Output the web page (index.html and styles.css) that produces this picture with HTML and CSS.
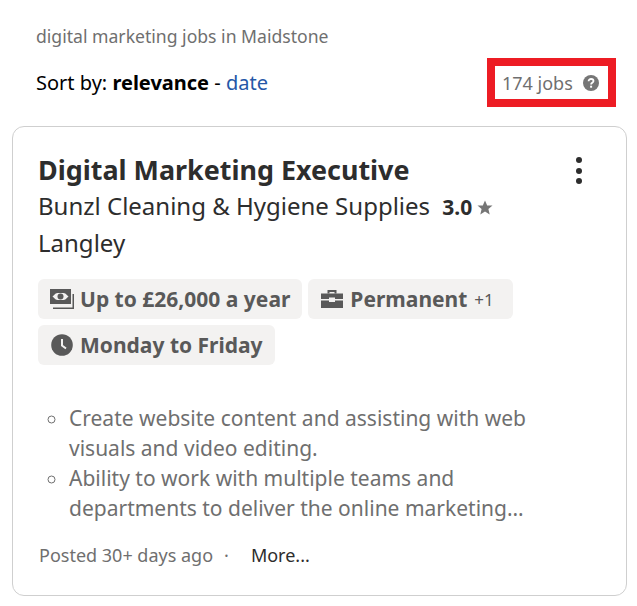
FILE: index.html
```html
<!DOCTYPE html>
<html>
<head>
  <title>digital marketing jobs in Maidstone</title>
  <link rel="stylesheet" href="styles.css">
</head>
<body>
  <div class="query">digital marketing jobs in Maidstone</div>
  <div class="sort-row">
    <div class="sort">Sort by: <b>relevance</b> - <a href="#">date</a></div>
    <div class="count">
      <span>174 jobs</span>
      <svg class="help" viewBox="0 0 16 16" width="16" height="16">
        <circle cx="8" cy="8" r="8" fill="#767676"/>
        <path d="M5.6 6.2c0-1.400 1-2.200 2.500-2.200s2.400.8 2.400 2c0 1.800-2.400 1.800-2.400 3.400" fill="none" stroke="#fff" stroke-width="1.800"/>
        <rect x="7.100" y="10.700" width="2" height="2" fill="#fff"/>
      </svg>
    </div>
  </div>

  <div class="card">
    <div class="menu"><i></i><i></i><i></i></div>
    <h2>Digital Marketing Executive</h2>
    <div class="company">Bunzl Cleaning &amp; Hygiene Supplies <b>3.0</b>
      <svg class="star" viewBox="0 0 16 16" width="16" height="16"><path d="M8 .6l2.200 5h5.300l-4.100 3.500 1.300 5.400L8 11.600l-4.700 2.900 1.300-5.400L.5 5.600h5.300z" fill="#767676"/></svg>
    </div>
    <div class="location">Langley</div>

    <div class="tags">
      <div class="tag">
        <svg viewBox="0 0 24 24" width="24" height="24">
          <path d="M0 2h21v15H0z" fill="#595959"/>
          <path d="M2.500 9.500C5 7 6 6 7.500 6h6c1.500 0 2.500 1 5 3.500-2.500 2.500-3.500 3.500-5 3.500h-6c-1.500 0-2.500-1-5-3.500z" fill="#f3f2f1"/>
          <circle cx="10.500" cy="9.500" r="3" fill="#595959"/>
          <path d="M22.500 7H24v15H3v-1.500h19.500z" fill="#595959"/>
        </svg>
        <b>Up to £26,000 a year</b>
      </div>
      <div class="tag tag-extra">
        <svg viewBox="0 0 24 24" width="24" height="24">
          <path d="M7.500 6.500V3h9v3.500h-2V5h-5v1.500z" fill="#595959"/>
          <path d="M1 6.500h22v5.500h-8v-1.500H9V12H1z" fill="#595959"/>
          <path d="M1 13.500h8V15h6v-1.500h8V21H1z" fill="#595959"/>
        </svg>
        <b>Permanent</b> <span class="more-tag">+1</span>
      </div>
      <div class="tag">
        <svg viewBox="0 0 24 24" width="24" height="24">
          <circle cx="12" cy="12" r="10.800" fill="#595959"/>
          <path d="M12 6v6.500l4 3" fill="none" stroke="#f3f2f1" stroke-width="2"/>
        </svg>
        <b>Monday to Friday</b>
      </div>
    </div>

    <ul class="snippet">
      <li>Create website content and assisting with web visuals and video editing.</li>
      <li>Ability to work with multiple teams and departments to deliver the online marketing…</li>
    </ul>

    <div class="footer">
      <span class="posted">Posted 30+ days ago</span>
      <span class="dot">·</span>
      <span class="more">More...</span>
    </div>
  </div>
</body>
</html>
```

FILE: styles.css
```css
body {
  font-family: "Noto Sans", sans-serif;
  margin: 0;
  background-color: #fff;
  color: #2d2d2d;
}

.query {
  font-size: 17.6px;
  line-height: 22px;
  color: #6f6f6f;
  padding: 25px 0 0 36px;
}

.sort-row {
  display: flex;
  justify-content: space-between;
  align-items: center;
  margin: 11px 21px 19px 36px;
}

.sort {
  font-size: 20px;
  color: #000;
}

.sort a {
  color: #2557a7;
  text-decoration: none;
}

.count {
  display: flex;
  align-items: center;
  gap: 10px;
  border: 8px solid #ed1c24;
  width: 129px;
  height: 49px;
  box-sizing: border-box;
  padding-left: 7px;
  font-size: 18px;
  color: #6f6f6f;
}

.card {
  position: relative;
  margin: 0 10px 0 12px;
  height: 470px;
  box-sizing: border-box;
  border: 1px solid #cfcfcf;
  border-radius: 12px;
  padding: 24px 25px 0;
}

.menu {
  position: absolute;
  top: 30px;
  right: 44px;
  display: flex;
  flex-direction: column;
  gap: 4.5px;
}

.menu i {
  width: 6px;
  height: 6px;
  border-radius: 50%;
  background-color: #2d2d2d;
}

h2 {
  font-size: 26.9px;
  line-height: 38px;
  margin: 0;
}

.company {
  font-size: 24px;
  line-height: 34px;
}

.company b {
  font-size: 21px;
  margin-left: 6px;
}

.star {
  vertical-align: -1px;
  margin-left: -2px;
}

.location {
  font-size: 24px;
  line-height: 34px;
  margin-top: 2px;
}

.tags {
  display: flex;
  flex-wrap: wrap;
  gap: 6px;
  margin-top: 19px;
  width: 500px;
}

.tag {
  display: flex;
  align-items: center;
  gap: 6px;
  height: 40px;
  padding: 0 12px;
  background-color: #f3f2f1;
  border-radius: 6px;
  color: #595959;
  font-size: 21px;
}

.tag-extra {
  padding-right: 19px;
}

.more-tag {
  font-size: 17px;
  margin-left: 1px;
}

.snippet {
  margin: 38px 0 0;
  padding: 0 0 0 31px;
  font-size: 21px;
  line-height: 30px;
  color: #6f6f6f;
  list-style-type: circle;
  width: 480px;
}

.footer {
  margin-top: 20px;
  font-size: 18px;
  line-height: 24px;
  display: flex;
  padding-left: 1px;
}

.posted {
  color: #6f6f6f;
}

.dot {
  color: #6f6f6f;
  margin: 0 22px 0 11px;
}

.more {
  color: #2d2d2d;
}
```
